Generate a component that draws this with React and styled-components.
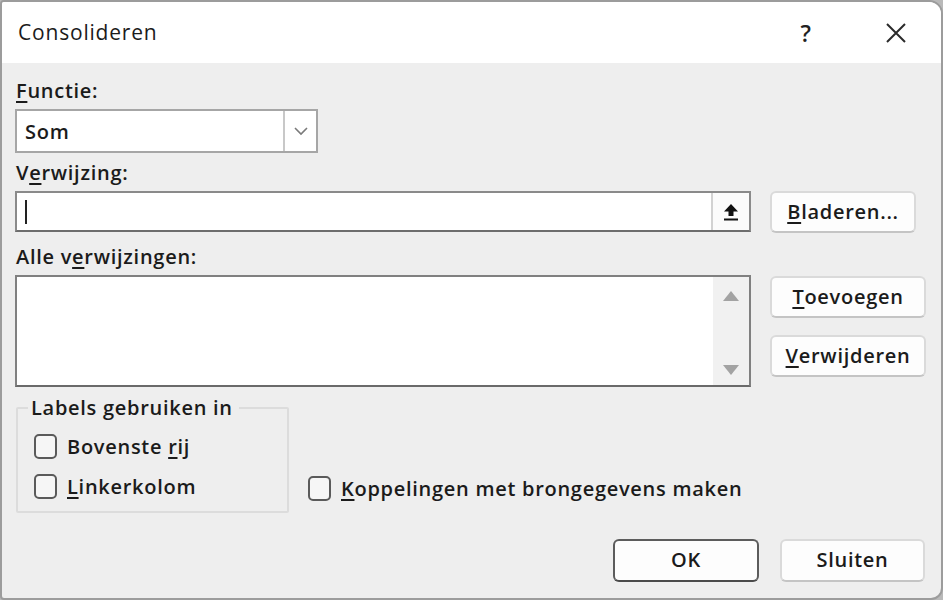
import styled, { createGlobalStyle } from "styled-components";

const GlobalStyle = createGlobalStyle`
  html, body {
    margin: 0;
    padding: 0;
    background: #b9b9b9;
  }
  * {
    box-sizing: border-box;
  }
`;

const Dialog = styled.div`
  width: 943px;
  height: 600px;
  display: flex;
  flex-direction: column;
  background: #eeeeee;
  border: 2px solid #9c9c9c;
  border-radius: 4px 14px 12px 4px;
  overflow: hidden;
  font-family: "Open Sans", "Noto Sans", sans-serif;
  font-size: 20px;
  letter-spacing: 0.72px;
  color: #1b1b1b;
`;

const TitleBar = styled.div`
  height: 61px;
  flex-shrink: 0;
  display: flex;
  align-items: center;
  background: #ffffff;
  padding: 0 0 0 16px;
`;

const Title = styled.div`
  flex: 1;
  font-size: 21px;
  font-weight: 500;
  letter-spacing: 0.8px;
  padding-bottom: 2px;
`;

const TitleButton = styled.div`
  width: 90px;
  height: 61px;
  display: flex;
  align-items: center;
  justify-content: center;
  font-size: 23px;
  font-weight: 600;
  color: #222;
`;

const Body = styled.div`
  flex: 1;
  display: flex;
  flex-direction: column;
  padding: 14px 14px 0 13px;
`;

const Label = styled.div`
  height: 30px;
  line-height: 28px;
  font-weight: 600;
  padding-left: 1px;
  margin-top: ${(p) => p.$top || 0}px;
`;

const Select = styled.div`
  width: 303px;
  height: 44px;
  display: flex;
  background: #fff;
  border: 2px solid #a6a6a6;
  margin-top: 2px;
`;

const SelectValue = styled.div`
  flex: 1;
  padding-left: 8px;
  display: flex;
  align-items: center;
  font-weight: 600;
`;

const SelectToggle = styled.div`
  width: 33px;
  display: flex;
  align-items: center;
  justify-content: center;
  border-left: 2px solid #c8c8c8;
`;

const Row = styled.div`
  display: flex;
  align-items: flex-start;
  gap: 19px;
  margin-top: ${(p) => p.$top || 0}px;
`;

const Input = styled.div`
  width: 736px;
  height: 41px;
  flex-shrink: 0;
  display: flex;
  background: #fff;
  border: 2px solid #8a8a8a;
  border-bottom-color: #6d6d6d;
`;

const Caret = styled.div`
  flex: 1;
  display: flex;
  align-items: center;
  padding-left: 8px;
  &::before {
    content: "";
    width: 2px;
    height: 24px;
    background: #222;
  }
`;

const CollapseButton = styled.div`
  width: 38px;
  display: flex;
  align-items: center;
  justify-content: center;
  border-left: 2px solid #d2d2d2;
  background: #fbfbfb;
`;

const Button = styled.div`
  width: ${(p) => p.$w || 146}px;
  height: ${(p) => p.$h || 42}px;
  flex-shrink: 0;
  display: flex;
  align-items: center;
  justify-content: center;
  background: #fdfdfd;
  border: ${(p) => (p.$primary ? "2px solid #5c5c5c" : "2px solid #dadada")};
  border-bottom-color: ${(p) => (p.$primary ? "#4a4a4a" : "#c4c4c4")};
  border-radius: 6px;
  font-weight: 600;
  padding-bottom: 2px;
`;

const List = styled.div`
  width: 736px;
  height: 112px;
  flex-shrink: 0;
  display: flex;
  justify-content: flex-end;
  background: #fff;
  border: 2px solid #808080;
  border-bottom-color: #6a6a6a;
`;

const Scrollbar = styled.div`
  width: 36px;
  display: flex;
  flex-direction: column;
  justify-content: space-between;
  align-items: center;
  background: #f1f1f1;
  padding: 14px 0 10px;
`;

const Arrow = styled.div`
  width: 0;
  height: 0;
  border-left: 8px solid transparent;
  border-right: 8px solid transparent;
  ${(p) =>
    p.$down
      ? "border-top: 10px solid #a3a3a3;"
      : "border-bottom: 10px solid #a3a3a3;"}
`;

const ButtonStack = styled.div`
  display: flex;
  flex-direction: column;
  gap: 17px;
  padding-top: 1px;
`;

const Options = styled.div`
  display: flex;
  align-items: flex-end;
  gap: 19px;
  margin-top: 9px;
`;

const Group = styled.fieldset`
  width: 273px;
  height: 117px;
  margin: 0 0 0 1px;
  padding: 12px 0 0 16px;
  border: 2px solid #dcdcdc;
  border-radius: 2px;
  display: flex;
  flex-direction: column;
  gap: 12px;
`;

const Legend = styled.legend`
  padding: 0 6px 0 3px;
  margin-left: -6px;
  font-weight: 600;
  line-height: 24px;
`;

const Check = styled.label`
  display: flex;
  align-items: center;
  gap: 10px;
  font-weight: 600;
  height: 28px;
  margin-bottom: ${(p) => p.$mb || 0}px;
`;

const Box = styled.span`
  width: 23px;
  height: 25px;
  border: 2px solid #5a5a5a;
  border-radius: 5px;
  background: #f6f6f6;
  flex-shrink: 0;
`;

const Footer = styled.div`
  display: flex;
  justify-content: flex-end;
  gap: 21px;
  margin-top: 26px;
  padding-right: 2px;
`;

const Key = styled.u`
  text-underline-offset: 3px;
  text-decoration-thickness: 2px;
`;

const UploadIcon = () => (
  <svg width="18" height="20" viewBox="0 0 18 20">
    <path d="M9 2 L16 9.5 H11.5 V14 H6.5 V9.5 H2 Z" fill="#111" />
    <rect x="2" y="16.5" width="14" height="2" fill="#111" />
  </svg>
);

const Chevron = () => (
  <svg width="16" height="10" viewBox="0 0 16 10">
    <path d="M2 2 L8 8 L14 2" fill="none" stroke="#7a7a7a" strokeWidth="1.6" />
  </svg>
);

const CloseIcon = () => (
  <svg width="22" height="22" viewBox="0 0 22 22">
    <path d="M2 2 L20 20 M20 2 L2 20" stroke="#2a2a2a" strokeWidth="2" />
  </svg>
);

export default function App() {
  return (
    <>
      <GlobalStyle />
      <Dialog>
        <TitleBar>
          <Title>Consolideren</Title>
          <TitleButton>?</TitleButton>
          <TitleButton>
            <CloseIcon />
          </TitleButton>
        </TitleBar>

        <Body>
          <Label>
            <Key>F</Key>unctie:
          </Label>
          <Select>
            <SelectValue>Som</SelectValue>
            <SelectToggle>
              <Chevron />
            </SelectToggle>
          </Select>

          <Label $top={6}>
            V<Key>e</Key>rwijzing:
          </Label>
          <Row $top={2}>
            <Input>
              <Caret />
              <CollapseButton>
                <UploadIcon />
              </CollapseButton>
            </Input>
            <Button $w={146} $h={42}>
              <Key>B</Key>laderen...
            </Button>
          </Row>

          <Label $top={10}>
            Alle v<Key>e</Key>rwijzingen:
          </Label>
          <Row $top={2}>
            <List>
              <Scrollbar>
                <Arrow />
                <Arrow $down />
              </Scrollbar>
            </List>
            <ButtonStack>
              <Button $w={156} $h={42}>
                <Key>T</Key>oevoegen
              </Button>
              <Button $w={156} $h={42}>
                <Key>V</Key>erwijderen
              </Button>
            </ButtonStack>
          </Row>

          <Options>
            <Group>
              <Legend>Labels gebruiken in</Legend>
              <Check>
                <Box />
                <span>
                  Bovenste <Key>r</Key>ij
                </span>
              </Check>
              <Check>
                <Box />
                <span>
                  <Key>L</Key>inkerkolom
                </span>
              </Check>
            </Group>
            <Check $mb={11}>
              <Box />
              <span>
                <Key>K</Key>oppelingen met brongegevens maken
              </span>
            </Check>
          </Options>

          <Footer>
            <Button $primary $w={146} $h={43}>
              OK
            </Button>
            <Button $w={145} $h={43}>
              Sluiten
            </Button>
          </Footer>
        </Body>
      </Dialog>
    </>
  );
}
